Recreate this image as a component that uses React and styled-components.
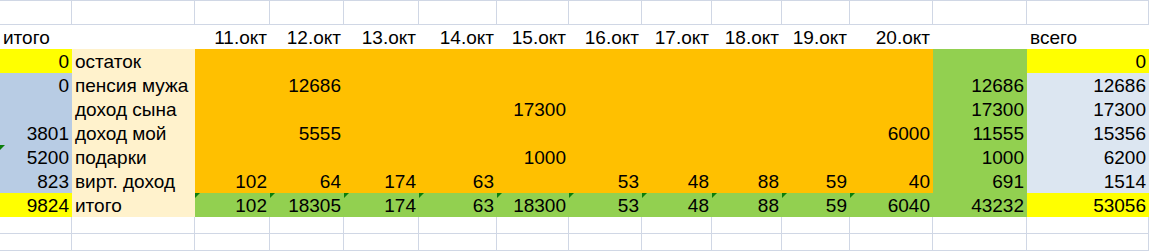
import React from 'react'
import styled, { createGlobalStyle } from 'styled-components'

const GRID = '#d0d7e5';
const YELLOW = '#ffff00';
const BLUE = '#b8cce4';
const BEIGE = '#fff2cc';
const ORANGE = '#ffc000';
const GREEN = '#92d050';
const PALE = '#dce6f1';

const widths = [72, 123, 75, 74, 75, 78, 72, 73, 70, 70, 68, 83, 94, 122];
const days = ['11.окт', '12.окт', '13.окт', '14.окт', '15.окт', '16.окт', '17.окт', '18.окт', '19.окт', '20.окт'];

const rows = [
  { total: '0', totalFill: YELLOW, label: 'остаток', values: [], sum: '', all: '0', allFill: YELLOW },
  { total: '0', label: 'пенсия мужа', values: ['', '12686'], sum: '12686', all: '12686' },
  { total: '', label: 'доход сына', values: ['', '', '', '', '17300'], sum: '17300', all: '17300' },
  { total: '3801', label: 'доход мой', values: ['', '5555', '', '', '', '', '', '', '', '6000'], sum: '11555', all: '15356' },
  { total: '5200', mark: true, label: 'подарки', values: ['', '', '', '', '1000'], sum: '1000', all: '6200' },
  { total: '823', label: 'вирт. доход', values: ['102', '64', '174', '63', '', '53', '48', '88', '59', '40'], sum: '691', all: '1514' },
];

const totals = ['102', '18305', '174', '63', '18300', '53', '48', '88', '59', '6040'];

const GlobalStyle = createGlobalStyle`
  html, body {
    margin: 0;
    background: #fff;
    overflow: hidden;
  }
`;

const Sheet = styled.div`
  display: grid;
  grid-template-columns: ${widths.map(w => w + 'px').join(' ')};
  grid-template-rows: 24px repeat(8, 24px) 17px 17px;
  border-top: 1px solid ${GRID};
  font-family: "Liberation Sans", Arial, sans-serif;
  font-size: 19px;
  color: #000;
`;

const Cell = styled.div`
  position: relative;
  box-sizing: border-box;
  padding: 0 3px;
  line-height: 26px;
  white-space: nowrap;
  text-align: ${p => p.$align || 'left'};
  background: ${p => p.$fill || '#fff'};
  box-shadow: ${p => p.$fill ? 'none' : `inset -1px -1px 0 ${GRID}`};

  ${p => p.$mark && `
    &::before {
      content: '';
      position: absolute;
      top: 0;
      left: 0;
      border-top: 5px solid #0b7d0b;
      border-right: 5px solid transparent;
    }
  `}
`;

const Num = props => <Cell $align="right" {...props} />;

function EmptyRow() {
  return widths.map((w, i) => <Cell key={i} />);
}

export default function App() {
  return (
    <>
      <GlobalStyle />
      <Sheet>
        <EmptyRow />

        <Cell $fill="#fff">итого</Cell>
        <Cell $fill="#fff" />
        {days.map(d => <Num key={d} $fill="#fff">{d}</Num>)}
        <Cell $fill="#fff" />
        <Cell $fill="#fff">всего</Cell>

        {rows.map(r => (
          <React.Fragment key={r.label}>
            <Num $fill={r.totalFill || BLUE} $mark={r.mark}>{r.total}</Num>
            <Cell $fill={BEIGE}>{r.label}</Cell>
            {days.map((d, i) => <Num key={d} $fill={ORANGE}>{r.values[i] || ''}</Num>)}
            <Num $fill={GREEN}>{r.sum}</Num>
            <Num $fill={r.allFill || PALE}>{r.all}</Num>
          </React.Fragment>
        ))}

        <Num $fill={YELLOW}>9824</Num>
        <Cell $fill={BEIGE}>итого</Cell>
        {totals.map((t, i) => <Num key={i} $fill={GREEN} $mark>{t}</Num>)}
        <Num $fill={GREEN}>43232</Num>
        <Num $fill={YELLOW}>53056</Num>

        <EmptyRow />
        <EmptyRow />
      </Sheet>
    </>
  )
}
